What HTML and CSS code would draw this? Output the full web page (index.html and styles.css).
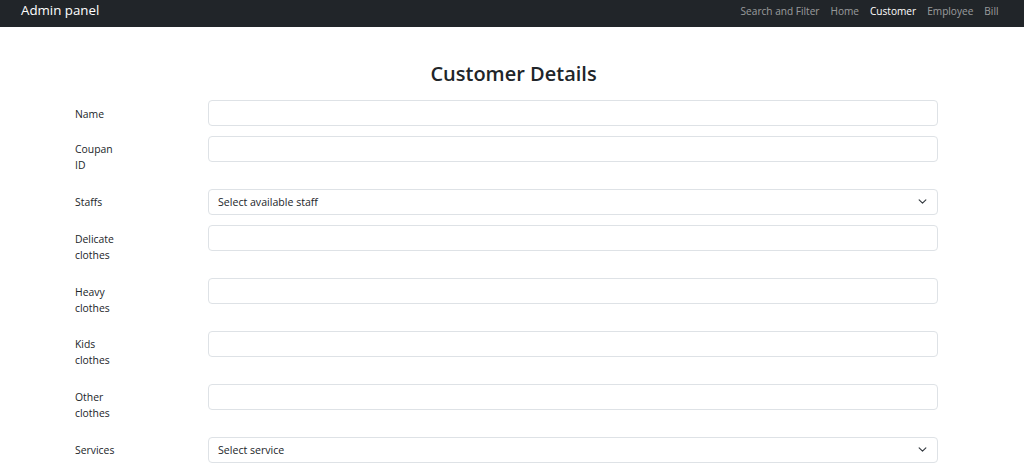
FILE: index.html
```html
<!DOCTYPE html>
<html lang="en">
<head>
<meta charset="utf-8">
<title>Admin panel</title>
<link rel="stylesheet" href="styles.css">
</head>
<body>
<nav class="navbar">
  <a class="brand" href="#">Admin panel</a>
  <ul class="nav">
    <li><a href="#">Search and Filter</a></li>
    <li><a href="#">Home</a></li>
    <li><a class="active" href="#">Customer</a></li>
    <li><a href="#">Employee</a></li>
    <li><a href="#">Bill</a></li>
  </ul>
</nav>
<main class="content">
  <h3 class="title">Customer Details</h3>
  <form class="form">
    <div class="row"><label class="label">Name</label><input class="control" type="text"></div>
    <div class="row"><label class="label">Coupan ID</label><input class="control" type="text"></div>
    <div class="row"><label class="label">Staffs</label>
      <div class="control select"><span>Select available staff</span>
        <svg class="chev" viewBox="0 0 16 16"><path d="m2 5 6 6 6-6" fill="none" stroke="#343a40" stroke-width="2" stroke-linecap="round" stroke-linejoin="round"/></svg>
      </div>
    </div>
    <div class="row"><label class="label">Delicate clothes</label><input class="control" type="text"></div>
    <div class="row"><label class="label">Heavy clothes</label><input class="control" type="text"></div>
    <div class="row"><label class="label">Kids clothes</label><input class="control" type="text"></div>
    <div class="row"><label class="label">Other clothes</label><input class="control" type="text"></div>
    <div class="row"><label class="label">Services</label>
      <div class="control select"><span>Select service</span>
        <svg class="chev" viewBox="0 0 16 16"><path d="m2 5 6 6 6-6" fill="none" stroke="#343a40" stroke-width="2" stroke-linecap="round" stroke-linejoin="round"/></svg>
      </div>
    </div>
  </form>
</main>
</body>
</html>
```
FILE: styles.css
```css
* { box-sizing: border-box; }
body {
  margin: 0;
  font-family: "Open Sans", "Noto Sans", sans-serif;
  color: #212529;
  background: #fff;
}
.navbar {
  height: 27px;
  background: #212529;
  display: flex;
  align-items: center;
  justify-content: space-between;
  padding: 0 20px 0 21px;
}
.brand {
  color: #fff;
  text-decoration: none;
  font-size: 13.3px;
  line-height: 20px;
  margin-top: -7px;
}
.nav {
  list-style: none;
  margin: 0;
  padding: 0;
  display: flex;
  margin-top: -6px;
}
.nav a {
  display: block;
  padding: 0 5.5px;
  font-size: 10.1px;
  line-height: 16px;
  color: rgba(255,255,255,.55);
  text-decoration: none;
}
.nav a.active { color: #fff; }
.content {
  padding: 0 86px 0 75px;
}
.title {
  margin: 33px -86px 12px -75px;
  text-align: center;
  font-size: 20px;
  line-height: 28px;
  font-weight: 600;
  padding-left: 3px;
}
.form { display: flex; flex-direction: column; }
.row {
  display: flex;
  align-items: flex-start;
  margin-bottom: 10px;
}
.row:first-child { margin-bottom: 9px; }
.label {
  flex: 0 0 133px;
  width: 133px;
  font-size: 10.4px;
  line-height: 16px;
  padding: 5.5px 0 5.3px;
  color: #212529;
  word-spacing: 200px;
}
.control {
  flex: 1;
  height: 26px;
  border: 1px solid #dee2e6;
  border-radius: 4px;
  background: #fff;
  font: inherit;
  font-size: 10.6px;
  padding: 0 9px;
}
.select {
  display: flex;
  align-items: center;
  justify-content: space-between;
  color: #212529;
}
.chev { width: 9px; height: 9px; margin-right: 1px; }
```
